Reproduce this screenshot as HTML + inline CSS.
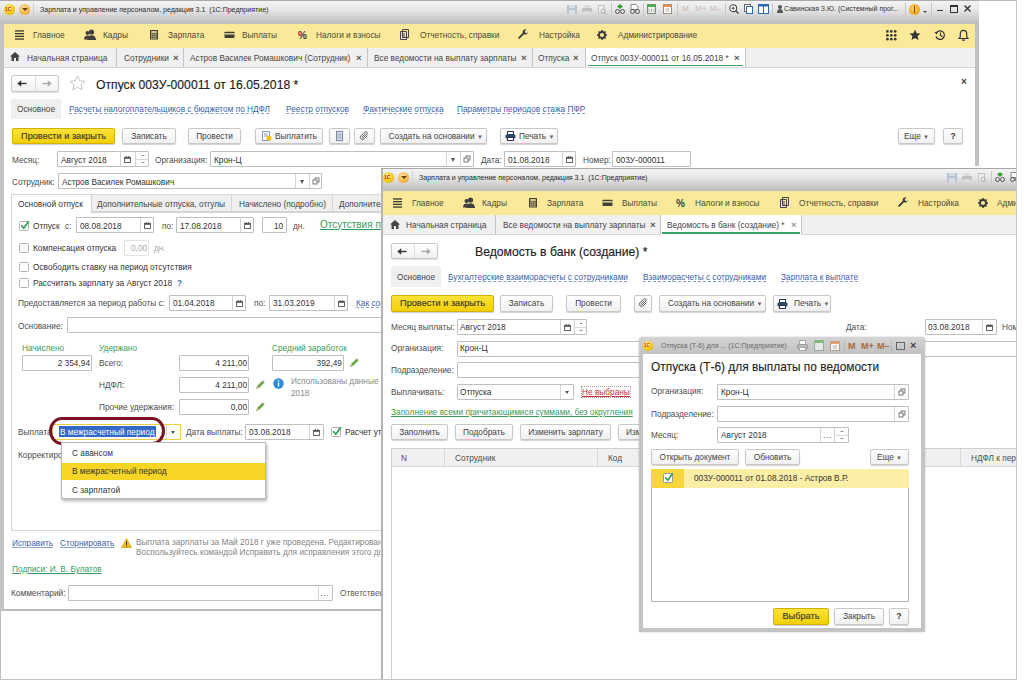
<!DOCTYPE html>
<html><head><meta charset="utf-8">
<style>
*{box-sizing:border-box;margin:0;padding:0}
html,body{width:1024px;height:687px;overflow:hidden;background:#fff}
body{position:relative;font-family:"Liberation Sans",sans-serif;font-size:8.3px;color:#4d4d4d;-webkit-font-smoothing:antialiased}
.a{position:absolute}
.t{position:absolute;white-space:nowrap;line-height:10px;height:10px}
.tb{position:absolute;background:linear-gradient(#f3f3f3,#e8e8e8 35%,#cdcdcd 75%,#bcbcbc)}
.menu{position:absolute;background:#fae998}
.tabs{position:absolute;background:#f0f0f0;border-bottom:1px solid #d6d6d6}
.sep{position:absolute;width:1px;background:#c4c4c4}
.fld{position:absolute;border:1px solid #bfbfbf;background:#fff;border-radius:1px;height:16px}
.fb{position:absolute;top:0;height:14px;border-left:1px solid #d4d4d4}
.btn{position:absolute;height:16px;border:1px solid #c8c8c8;border-radius:2px;background:linear-gradient(#ffffff,#f0f0f0);box-shadow:0 1px 1px rgba(0,0,0,.18);color:#444;text-align:center;line-height:14px;white-space:nowrap}
.ybtn{position:absolute;height:16px;border:1px solid #d2b200;border-radius:2px;background:linear-gradient(#fbe23a,#f3cf0a);box-shadow:0 1px 1px rgba(0,0,0,.2);color:#3a3a2a;font-size:9.2px;-webkit-text-stroke:0.15px #3a3a2a;text-align:center;line-height:14px;white-space:nowrap}
.lnk{color:#3d5fa6;text-decoration:underline;text-decoration-style:dashed;text-decoration-color:#8aa0c8}
.grn{color:#3b9b5c}
.dk{color:#333}
.cb{position:absolute;width:10px;height:10px;border:1px solid #b4b4b4;background:#fff;border-radius:1.5px}
.h{font-size:12.2px;color:#222;line-height:14px;height:14px;-webkit-text-stroke:0.15px #222}
</style></head><body>
<!-- outer frame -->
<div class="a" style="left:0;top:0;width:1017px;height:680px;border:1px solid #bdbdbd"></div>

<!-- ================= WINDOW 1 ================= -->
<div class="a" style="left:0;top:0;width:979px;height:611px;background:#fff;border-left:4px solid #c3c3c3;border-right:4px solid #c0c0c0;border-bottom:2px solid #b9b9b9"></div>
<div class="tb" style="left:0;top:1px;width:979px;height:22.5px"></div>
<div class="a" style="left:0;top:0;width:979px;height:1px;background:#aaa"></div>
<!-- title icons -->
<div class="a" style="left:4px;top:4px;width:11px;height:11px;border-radius:50%;background:radial-gradient(circle at 40% 35%,#fff7a0,#f2c400 60%,#e0a800)"></div>
<div class="t" style="left:5px;top:4px;font-size:5px;color:#d02000;font-weight:bold">1С</div>
<div class="a" style="left:19px;top:4px;width:11px;height:11px;border-radius:50%;background:radial-gradient(circle at 40% 35%,#ffe1a0,#f5b040 65%,#d99020)"></div>
<div class="a" style="left:22px;top:8px;width:0;height:0;border-left:3px solid transparent;border-right:3px solid transparent;border-top:3px solid #6a4000"></div>
<div class="sep" style="left:33px;top:3px;height:15px;background:#d0d0d0"></div>
<div class="t" style="left:40px;top:4.5px;font-size:7.05px;color:#2a2a2a">Зарплата и управление персоналом, редакция 3.1&nbsp; (1С:Предприятие)</div>

<!-- w1 title icons -->
<svg class="a" style="left:567px;top:5px" width="10" height="9" viewBox="0 0 10 9"><rect x="0" y="0" width="10" height="9" fill="#b9c4d0"/><rect x="2" y="0" width="6" height="3" fill="#d8dee6"/><rect x="2" y="5" width="6" height="4" fill="#d8dee6"/></svg><svg class="a" style="left:582px;top:5px" width="10" height="9" viewBox="0 0 10 9"><rect x="2" y="0" width="6" height="3" fill="#ddd"/><rect x="0" y="3" width="10" height="4" rx="1" fill="#c0c0c0"/><rect x="2" y="6" width="6" height="3" fill="#ddd"/></svg><svg class="a" style="left:598px;top:5px" width="9" height="10" viewBox="0 0 9 10"><rect x="0.5" y="0.5" width="6" height="8" fill="#eee" stroke="#c4c4c4"/><circle cx="5" cy="6" r="2" fill="none" stroke="#b0b0b0"/><path d="M6.5 7.5l2 2" stroke="#b0b0b0"/></svg><div class="sep" style="left:611px;top:3px;height:14px;background:#c8c8c8"></div><svg class="a" style="left:615px;top:4px" width="10" height="10" viewBox="0 0 10 10"><path d="M5 0l3 2.5-3 2.5-3-2.5z" fill="#3aa03a"/><circle cx="2.5" cy="7.5" r="2" fill="none" stroke="#555"/><circle cx="7.5" cy="7.5" r="2" fill="none" stroke="#555"/></svg><svg class="a" style="left:630px;top:4px" width="10" height="10" viewBox="0 0 10 10"><path d="M1 .5h5l2 2v3H1z" fill="#fff" stroke="#888"/><circle cx="2.5" cy="7.5" r="2" fill="none" stroke="#555"/><circle cx="7.5" cy="7.5" r="2" fill="none" stroke="#555"/></svg><div class="sep" style="left:643px;top:3px;height:14px;background:#c8c8c8"></div><svg class="a" style="left:647px;top:4px" width="9" height="10" viewBox="0 0 9 10"><rect x="0.5" y="0.5" width="8" height="9" fill="#eef2ee" stroke="#7a8a7a"/><rect x="0.5" y="0.5" width="8" height="2.5" fill="#4cae4c"/><path d="M2 5v3M4.5 5v3M7 5v3" stroke="#888" stroke-width=".6"/></svg><svg class="a" style="left:663px;top:4px" width="9" height="10" viewBox="0 0 9 10"><rect x="0.5" y="0.5" width="8" height="9" fill="#fff" stroke="#9a8a7a"/><rect x="0.5" y="0.5" width="8" height="2.5" fill="#e8904a"/><path d="M2.5 5h4M2.5 7h4" stroke="#888" stroke-width=".7"/></svg><div class="sep" style="left:677px;top:3px;height:14px;background:#c8c8c8"></div><div class="t" style="left:682px;top:4px;font-size:8px;color:#c8b8b0">M</div><div class="t" style="left:695px;top:4px;font-size:8px;color:#c8b8b0">M+</div><div class="t" style="left:710px;top:4px;font-size:8px;color:#c8b8b0">M–</div><div class="sep" style="left:725px;top:3px;height:14px;background:#c8c8c8"></div><svg class="a" style="left:729px;top:4px" width="10" height="10" viewBox="0 0 10 10"><circle cx="4.2" cy="4.2" r="3.4" fill="#fff" stroke="#444" stroke-width="1.1"/><path d="M2.5 4.2h3.4M4.2 2.5v3.4" stroke="#444" stroke-width=".9"/><path d="M6.7 6.7l2.8 2.8" stroke="#444" stroke-width="1.4"/></svg><svg class="a" style="left:744px;top:4px" width="9" height="10" viewBox="0 0 9 10"><rect x="0.5" y="0.5" width="6" height="7" fill="#fff" stroke="#666"/><rect x="2.5" y="2.5" width="6" height="7" fill="#fff" stroke="#2d6ab0"/></svg><svg class="a" style="left:758px;top:4px" width="11" height="10" viewBox="0 0 11 10"><rect x="0.5" y="0.5" width="10" height="9" fill="#fff" stroke="#2d6ab0"/><rect x="0.5" y="0.5" width="10" height="2" fill="#2d6ab0"/><path d="M5.5 2v8" stroke="#2d6ab0"/></svg><div class="sep" style="left:772px;top:3px;height:14px;background:#c8c8c8"></div><svg class="a" style="left:777px;top:5px" width="6" height="8" viewBox="0 0 6 8"><circle cx="3" cy="2" r="2" fill="#555"/><path d="M0 8c0-3 1.3-4 3-4s3 1 3 4z" fill="#555"/></svg><div class="t" style="left:784px;top:4px;font-size:7px;color:#333">Савинская З.Ю. (Системный прог...</div><div class="sep" style="left:905px;top:3px;height:14px;background:#c8c8c8"></div><div class="a" style="left:909px;top:4px;width:11px;height:11px;border-radius:50%;background:radial-gradient(circle at 45% 40%,#ffd060,#f0a820 70%,#d08a10)"></div><div class="a" style="left:914px;top:6px;width:1px;height:7px;background:#7a5000"></div><div class="a" style="left:923px;top:11px;width:0;height:0;border-left:2.5px solid transparent;border-right:2.5px solid transparent;border-top:2.5px solid #444"></div><div class="sep" style="left:931px;top:3px;height:14px;background:#c8c8c8"></div><div class="a" style="left:937px;top:10px;width:6px;height:1.2px;background:#333"></div><div class="a" style="left:950px;top:5px;width:8px;height:8px;border:1px solid #333;border-top-width:2px"></div><svg class="a" style="left:964px;top:5px" width="7" height="7" viewBox="0 0 7 7"><path d="M.5 .5l6 6M6.5 .5l-6 6" stroke="#333" stroke-width="1.4"/></svg>
<div class="menu" style="left:4px;top:23.5px;width:971px;height:24px"></div>
<div class="tabs" style="left:4px;top:47.5px;width:971px;height:20.5px"></div>

<!-- menu items w1 -->
<svg class="a" style="left:15px;top:30px" width="9" height="10" viewBox="0 0 9 10"><g fill="#3a3a30"><rect y="0.3" width="9" height="1.3"/><rect y="3" width="9" height="1.3"/><rect y="5.7" width="9" height="1.3"/><rect y="8.4" width="9" height="1.3"/></g></svg>
<div class="t" style="left:33px;top:30px;color:#4a4a3a">Главное</div>
<svg class="a" style="left:84px;top:29px" width="12" height="11" viewBox="0 0 12 11"><g fill="#3f3f3f"><circle cx="7.5" cy="3" r="2.6"/><path d="M3 11c0-3 2-4.8 4.5-4.8S12 8 12 11z"/><circle cx="3.5" cy="4" r="2"/><path d="M0 10.5c0-2.5 1.5-4 3.5-4 .8 0 1.5.2 2 .6C4.3 8 3.6 9 3.5 10.5z"/></g></svg>
<div class="t" style="left:103px;top:30px;color:#4a4a3a">Кадры</div>
<svg class="a" style="left:150px;top:29px" width="8" height="11" viewBox="0 0 8 11"><rect x="0" y="1" width="8" height="9.5" rx=".6" fill="#3f3f38"/><rect x="1.2" y="2.2" width="5.6" height="1.6" fill="#fae998"/><g fill="#fae998"><rect x="1.20" y="4.60" width="1.3" height="1.2"/><rect x="3.25" y="4.60" width="1.3" height="1.2"/><rect x="5.30" y="4.60" width="1.3" height="1.2"/><rect x="1.20" y="6.55" width="1.3" height="1.2"/><rect x="3.25" y="6.55" width="1.3" height="1.2"/><rect x="5.30" y="6.55" width="1.3" height="1.2"/><rect x="1.20" y="8.50" width="1.3" height="1.2"/><rect x="3.25" y="8.50" width="1.3" height="1.2"/><rect x="5.30" y="8.50" width="1.3" height="1.2"/></g></svg>
<div class="t" style="left:168px;top:30px;color:#4a4a3a">Зарплата</div>
<svg class="a" style="left:224px;top:31px" width="12" height="8" viewBox="0 0 12 8"><rect x="0.5" y="0.8" width="10" height="6.2" rx=".8" fill="#3f3f38"/><rect x="0.5" y="2.2" width="10" height="1.3" fill="#fae998"/></svg>
<div class="t" style="left:242px;top:30px;color:#4a4a3a">Выплаты</div>
<div class="t" style="left:298px;top:31px;color:#3a3a3a;font-size:10px;font-weight:bold">%</div>
<div class="t" style="left:316px;top:30px;color:#4a4a3a">Налоги и взносы</div>
<svg class="a" style="left:400px;top:29px" width="9" height="11" viewBox="0 0 9 11"><path d="M2.5 .5h6v8h-6z M.5 2.5h6v8h-6z" fill="none" stroke="#444" stroke-width="1"/><path d="M2 5h3M2 7h3" stroke="#444"/></svg>
<div class="t" style="left:420px;top:30px;color:#4a4a3a">Отчетность, справки</div>
<svg class="a" style="left:518px;top:29px" width="11" height="11" viewBox="0 0 11 11"><path d="M10 2.5a3 3 0 0 1-4 2.8L1.8 9.6a1 1 0 0 1-1.4-1.4L4.7 4A3 3 0 0 1 8.5.4L6.8 2.1l.4 1.7 1.7.4z" fill="#3a3a3a"/></svg>
<div class="t" style="left:539px;top:30px;color:#4a4a3a">Настройка</div>
<svg class="a" style="left:597px;top:30px" width="10" height="10" viewBox="0 0 10 10"><circle cx="5" cy="5" r="3" fill="none" stroke="#3a3a3a" stroke-width="1.8"/><g stroke="#3a3a3a" stroke-width="1.5"><path d="M5 0v2M5 8v2M0 5h2M8 5h2M1.5 1.5l1.4 1.4M7.1 7.1l1.4 1.4M1.5 8.5l1.4-1.4M7.1 2.9l1.4-1.4"/></g></svg>
<div class="t" style="left:618px;top:30px;color:#4a4a3a">Администрирование</div>
<svg class="a" style="left:886px;top:29.5px" width="11" height="11" viewBox="0 0 11 11"><g fill="#3a3a3a"><circle cx="1.40" cy="1.40" r="1.35"/><circle cx="5.30" cy="1.40" r="1.35"/><circle cx="9.20" cy="1.40" r="1.35"/><circle cx="1.40" cy="5.30" r="1.35"/><circle cx="5.30" cy="5.30" r="1.35"/><circle cx="9.20" cy="5.30" r="1.35"/><circle cx="1.40" cy="9.20" r="1.35"/><circle cx="5.30" cy="9.20" r="1.35"/><circle cx="9.20" cy="9.20" r="1.35"/></g></svg>
<svg class="a" style="left:909px;top:29px" width="12" height="12" viewBox="0 0 12 12"><path d="M6 0.5l1.6 3.7 4 .3-3 2.6.9 3.9L6 8.9 2.5 11l.9-3.9-3-2.6 4-.3z" fill="#333"/></svg>
<svg class="a" style="left:934px;top:29px" width="12" height="12" viewBox="0 0 12 12"><path d="M2.2 4.2A4.3 4.3 0 1 1 2 7.5" fill="none" stroke="#333" stroke-width="1.2"/><path d="M0.5 3.2l2.2 2.2 1.2-2.8z" fill="#333"/><path d="M6.5 3.5v3l2 1.2" fill="none" stroke="#333" stroke-width="1.1"/></svg>
<svg class="a" style="left:958px;top:29px" width="11" height="12" viewBox="0 0 11 12"><path d="M5.5 1.3c-2 0-3.2 1.5-3.2 3.5v3L1 9.5h9L8.7 7.8v-3c0-2-1.2-3.5-3.2-3.5z" fill="none" stroke="#333" stroke-width="1.2"/><path d="M4 10.5a1.5 1.5 0 0 0 3 0" fill="#333"/></svg>

<!-- tabs w1 -->
<svg class="a" style="left:10px;top:52px" width="10" height="9" viewBox="0 0 10 9"><path d="M5 0L0 4.5h1.5V9h2.5V6h2v3h2.5V4.5H10z" fill="#444"/></svg>
<div class="t" style="left:27px;top:52.5px;color:#444">Начальная страница</div>
<div class="sep" style="left:116px;top:48px;height:19px"></div>
<div class="t" style="left:124px;top:52.5px;color:#444">Сотрудники</div>
<div class="t" style="left:173px;top:52.5px;color:#555;font-size:9.5px;font-weight:bold">×</div>
<div class="sep" style="left:183px;top:48px;height:19px"></div>
<div class="t" style="left:190px;top:52.5px;color:#444">Астров Василек Ромашкович (Сотрудник)</div>
<div class="t" style="left:356px;top:52.5px;color:#555;font-size:9.5px;font-weight:bold">×</div>
<div class="sep" style="left:367px;top:48px;height:19px"></div>
<div class="t" style="left:374px;top:52.5px;color:#444">Все ведомости на выплату зарплаты</div>
<div class="t" style="left:521px;top:52.5px;color:#555;font-size:9.5px;font-weight:bold">×</div>
<div class="sep" style="left:532px;top:48px;height:19px"></div>
<div class="t" style="left:538px;top:52.5px;color:#444">Отпуска</div>
<div class="t" style="left:573px;top:52.5px;color:#555;font-size:9.5px;font-weight:bold">×</div>
<div class="sep" style="left:585px;top:48px;height:19px"></div>
<div class="a" style="left:586px;top:48px;width:159px;height:19px;background:#fff"></div>
<div class="t" style="left:591px;top:52.5px;color:#444">Отпуск 003У-000011 от 16.05.2018 *</div>
<div class="t" style="left:734px;top:52.5px;color:#555;font-size:9.5px;font-weight:bold">×</div>
<div class="sep" style="left:745px;top:48px;height:19px"></div>
<div class="a" style="left:588px;top:64.5px;width:155px;height:1.6px;background:#3aa36a"></div>

<!-- w1 content header -->
<div class="btn" style="left:11px;top:75px;width:48px;height:17px;box-shadow:0 1px 1px rgba(0,0,0,.12)"></div>
<div class="sep" style="left:35px;top:76px;height:15px;background:#dcdcdc"></div>
<svg class="a" style="left:17px;top:80px" width="10" height="7" viewBox="0 0 10 7"><path d="M0.3 3.5L4.2 0.3v6.4z" fill="#333"/><rect x="3.5" y="2.8" width="6" height="1.4" fill="#333"/></svg>
<svg class="a" style="left:42px;top:80px" width="10" height="7" viewBox="0 0 10 7"><path d="M9.7 3.5L5.8 0.3v6.4z" fill="#aaa"/><rect x="0.5" y="2.8" width="6" height="1.4" fill="#aaa"/></svg>
<svg class="a" style="left:69px;top:75px" width="17" height="16" viewBox="0 0 17 16"><path d="M8.5 1l2.2 4.8 5.2.5-3.9 3.5 1.1 5.1-4.6-2.7-4.6 2.7 1.1-5.1L1.1 6.3l5.2-.5z" fill="none" stroke="#c4c4c4" stroke-width="1"/></svg>
<div class="t h" style="left:96px;top:77.7px">Отпуск 003У-000011 от 16.05.2018 *</div>
<div class="t" style="left:961px;top:77px;color:#444;font-size:10px;font-weight:bold">×</div>

<div class="a" style="left:11px;top:99px;width:50px;height:20px;background:#efefef;border-radius:2px"></div>
<div class="t" style="left:17px;top:104px;color:#444">Основное</div>
<div class="t lnk" style="left:69px;top:104px">Расчеты налогоплательщиков с бюджетом по НДФЛ</div>
<div class="t lnk" style="left:286px;top:104px">Реестр отпусков</div>
<div class="t lnk" style="left:363px;top:104px">Фактические отпуска</div>
<div class="t lnk" style="left:457px;top:104px">Параметры периодов стажа ПФР</div>

<!-- command bar -->
<div class="ybtn" style="left:12px;top:128px;width:103px">Провести и закрыть</div>
<div class="btn" style="left:122px;top:128px;width:54px">Записать</div>
<div class="btn" style="left:188px;top:128px;width:53px">Провести</div>
<div class="btn" style="left:255px;top:128px;width:68px;padding-left:14px">Выплатить</div>
<svg class="a" style="left:262px;top:131px" width="10" height="10" viewBox="0 0 10 10"><rect x="0.5" y="0.5" width="7" height="9" fill="#fff" stroke="#8a9ab0"/><path d="M2 3h4M2 5h4" stroke="#8a9ab0"/><circle cx="7" cy="7" r="2.5" fill="#f3c200"/></svg>
<div class="btn" style="left:329px;top:128px;width:21px"></div>
<svg class="a" style="left:336px;top:131px" width="7" height="10" viewBox="0 0 7 10"><rect x="0.5" y="0.5" width="6" height="9" fill="#dfe6f0" stroke="#7a8aa0"/><path d="M1.5 3h4M1.5 5h4M1.5 7h4" stroke="#7a8aa0" stroke-width=".8"/></svg>
<div class="btn" style="left:354px;top:128px;width:21px"></div>
<svg class="a" style="left:359px;top:131px" width="11" height="10" viewBox="0 0 11 10"><path d="M8.5 4.5L5 8a2.2 2.2 0 0 1-3.1-3.1l4-4a1.5 1.5 0 0 1 2.1 2.1L4.3 6.6a.7.7 0 0 1-1-1L6.5 2.5" fill="none" stroke="#666" stroke-width="1"/></svg>
<div class="btn" style="left:380px;top:128px;width:107px;text-align:left;padding-left:7.5px">Создать на основании <span style="font-size:6px;color:#666">&#9660;</span></div>
<div class="btn" style="left:500px;top:128px;width:58px;text-align:left;padding-left:18px">Печать <span style="font-size:6px;color:#666">&#9660;</span></div>
<svg class="a" style="left:505px;top:131px" width="11" height="10" viewBox="0 0 11 10"><rect x="2.5" y="0.5" width="6" height="3" fill="#fff" stroke="#335"/><rect x="0.5" y="3.5" width="10" height="4" rx="1" fill="#2c4c6e"/><rect x="2.5" y="6.5" width="6" height="3" fill="#fff" stroke="#335"/></svg>
<div class="btn" style="left:898px;top:128px;width:37px">Еще <span style="font-size:6px;color:#666">&#9660;</span></div>
<div class="btn dk" style="left:943px;top:128px;width:20px;font-weight:bold">?</div>

<!-- Месяц row -->
<div class="t" style="left:12px;top:155px">Месяц:</div>
<div class="fld" style="left:57px;top:151px;width:92px"></div>
<div class="t dk" style="left:61px;top:155px">Август 2018</div>
<div class="fb" style="left:120px;top:152px;width:15px"></div>
<svg class="a" style="left:124px;top:156px" width="7" height="7" viewBox="0 0 7 7"><rect x="0.5" y="1.5" width="6" height="5" fill="none" stroke="#555" stroke-width=".9"/><rect x="0.5" y="1" width="6" height="1.8" fill="#555"/><rect x="1.8" y="0" width="1" height="1.5" fill="#555"/><rect x="4.2" y="0" width="1" height="1.5" fill="#555"/></svg>
<div class="a" style="left:135px;top:152px;width:14px;height:14px;border-left:1px solid #d0d0d0"></div><div class="a" style="left:135px;top:159px;width:14px;height:1px;background:#d8d8d8"></div><div class="a" style="left:140.5px;top:155px;width:0;height:0;border-left:2px solid transparent;border-right:2px solid transparent;border-bottom:1.6px solid #666"></div><div class="a" style="left:140.5px;top:162px;width:0;height:0;border-left:2px solid transparent;border-right:2px solid transparent;border-top:1.6px solid #666"></div>
<div class="t" style="left:155px;top:155px">Организация:</div>
<div class="fld" style="left:210px;top:151px;width:264px"></div>
<div class="t dk" style="left:214px;top:155px">Крон-Ц</div>
<div class="fb" style="left:446px;top:152px;width:14px"></div>
<div class="a" style="left:451px;top:158px;width:0;height:0;border-left:2.5px solid transparent;border-right:2.5px solid transparent;border-top:4px solid #555"></div>
<div class="fb" style="left:460px;top:152px;width:14px"></div>
<svg class="a" style="left:463px;top:155px" width="8" height="8" viewBox="0 0 8 8"><rect x="3" y="1" width="4" height="4" fill="none" stroke="#6a6a6a" stroke-width=".9"/><rect x="1" y="3" width="4" height="4" fill="#fff" stroke="#6a6a6a" stroke-width=".9"/></svg>
<div class="t" style="left:481px;top:155px">Дата:</div>
<div class="fld" style="left:504px;top:151px;width:72px"></div>
<div class="t dk" style="left:508px;top:155px">01.08.2018</div>
<div class="fb" style="left:562px;top:152px;width:14px"></div>
<svg class="a" style="left:566px;top:156px" width="7" height="7" viewBox="0 0 7 7"><rect x="0.5" y="1.5" width="6" height="5" fill="none" stroke="#555" stroke-width=".9"/><rect x="0.5" y="1" width="6" height="1.8" fill="#555"/><rect x="1.8" y="0" width="1" height="1.5" fill="#555"/><rect x="4.2" y="0" width="1" height="1.5" fill="#555"/></svg>
<div class="t" style="left:583px;top:155px">Номер:</div>
<div class="fld" style="left:612px;top:151px;width:79px"></div>
<div class="t dk" style="left:616px;top:155px">003У-000011</div>

<!-- Сотрудник row -->
<div class="t" style="left:12px;top:177px">Сотрудник:</div>
<div class="fld" style="left:58px;top:173px;width:264px"></div>
<div class="t dk" style="left:62px;top:177px">Астров Василек Ромашкович</div>
<div class="fb" style="left:295px;top:174px;width:14px"></div>
<div class="a" style="left:300px;top:180px;width:0;height:0;border-left:2.5px solid transparent;border-right:2.5px solid transparent;border-top:4px solid #555"></div>
<div class="fb" style="left:309px;top:174px;width:13px"></div>
<svg class="a" style="left:312px;top:177px" width="8" height="8" viewBox="0 0 8 8"><rect x="3" y="1" width="4" height="4" fill="none" stroke="#6a6a6a" stroke-width=".9"/><rect x="1" y="3" width="4" height="4" fill="#fff" stroke="#6a6a6a" stroke-width=".9"/></svg>

<!-- tabs panel -->
<div class="a" style="left:11px;top:212px;width:380px;height:319px;border:1px solid #d4d4d4;border-right:none"></div>
<div class="a" style="left:91px;top:194px;width:300px;height:18px;background:#efefef;border-top:1px solid #dcdcdc;border-bottom:1px solid #d4d4d4"></div>
<div class="a" style="left:11px;top:194px;width:81px;height:19px;background:#fff;border:1px solid #d4d4d4;border-bottom:none"></div>
<div class="sep" style="left:231px;top:195px;height:17px;background:#d4d4d4"></div>
<div class="sep" style="left:332px;top:195px;height:17px;background:#d4d4d4"></div>
<div class="t dk" style="left:18px;top:199px">Основной отпуск</div>
<div class="t" style="left:97px;top:199px;color:#444">Дополнительные отпуска, отгулы</div>
<div class="t" style="left:239px;top:199px;color:#444">Начислено (подробно)</div>
<div class="t" style="left:339px;top:199px;color:#444">Дополнительно</div>

<!-- Отпуск row -->
<div class="cb" style="left:19px;top:221px"></div>
<svg class="a" style="left:19px;top:220px" width="11" height="11" viewBox="0 0 11 11"><path d="M2.2 5.2l2.6 3L9.8 1.3" fill="none" stroke="#2f9a55" stroke-width="1.7"/></svg>
<div class="t dk" style="left:33px;top:221px">Отпуск</div>
<div class="t" style="left:65px;top:221px">с:</div>
<div class="fld" style="left:76px;top:217px;width:78px"></div>
<div class="t dk" style="left:80px;top:221px">08.08.2018</div>
<div class="fb" style="left:140px;top:218px;width:14px"></div>
<svg class="a" style="left:144px;top:222px" width="7" height="7" viewBox="0 0 7 7"><rect x="0.5" y="1.5" width="6" height="5" fill="none" stroke="#555" stroke-width=".9"/><rect x="0.5" y="1" width="6" height="1.8" fill="#555"/><rect x="1.8" y="0" width="1" height="1.5" fill="#555"/><rect x="4.2" y="0" width="1" height="1.5" fill="#555"/></svg>
<div class="t" style="left:162px;top:221px">по:</div>
<div class="fld" style="left:176px;top:217px;width:78px"></div>
<div class="t dk" style="left:180px;top:221px">17.08.2018</div>
<div class="fb" style="left:240px;top:218px;width:14px"></div>
<svg class="a" style="left:244px;top:222px" width="7" height="7" viewBox="0 0 7 7"><rect x="0.5" y="1.5" width="6" height="5" fill="none" stroke="#555" stroke-width=".9"/><rect x="0.5" y="1" width="6" height="1.8" fill="#555"/><rect x="1.8" y="0" width="1" height="1.5" fill="#555"/><rect x="4.2" y="0" width="1" height="1.5" fill="#555"/></svg>
<div class="fld" style="left:262px;top:217px;width:25px"></div>
<div class="t dk" style="left:274px;top:221px">10</div>
<div class="t" style="left:293px;top:221px">дн.</div>
<div class="t grn" style="left:320px;top:219.5px;font-size:10px;text-decoration:underline">Отсутствия периода</div>

<div class="cb" style="left:19px;top:243px"></div>
<div class="t dk" style="left:33px;top:243px">Компенсация отпуска</div>
<div class="fld" style="left:124px;top:240px;width:25px;border-color:#e4e4e4"></div>
<div class="t" style="left:131px;top:243px;color:#aaa">0,00</div>
<div class="t" style="left:154px;top:243px;color:#aaa">дн.</div>

<div class="cb" style="left:19px;top:262px"></div>
<div class="t dk" style="left:33px;top:262px">Освободить ставку на период отсутствия</div>
<div class="cb" style="left:19px;top:278px"></div>
<div class="t dk" style="left:33px;top:278px">Рассчитать зарплату за Август 2018</div>
<div class="t" style="left:177px;top:278px;color:#3d6fb0;font-weight:bold">?</div>

<div class="t" style="left:18px;top:298px">Предоставляется за период работы с:</div>
<div class="fld" style="left:169px;top:295px;width:77px"></div>
<div class="t dk" style="left:173px;top:298px">01.04.2018</div>
<div class="fb" style="left:232px;top:296px;width:14px"></div>
<svg class="a" style="left:236px;top:300px" width="7" height="7" viewBox="0 0 7 7"><rect x="0.5" y="1.5" width="6" height="5" fill="none" stroke="#555" stroke-width=".9"/><rect x="0.5" y="1" width="6" height="1.8" fill="#555"/><rect x="1.8" y="0" width="1" height="1.5" fill="#555"/><rect x="4.2" y="0" width="1" height="1.5" fill="#555"/></svg>
<div class="t" style="left:254px;top:298px">по:</div>
<div class="fld" style="left:269px;top:295px;width:79px"></div>
<div class="t dk" style="left:273px;top:298px">31.03.2019</div>
<div class="fb" style="left:334px;top:296px;width:14px"></div>
<svg class="a" style="left:338px;top:300px" width="7" height="7" viewBox="0 0 7 7"><rect x="0.5" y="1.5" width="6" height="5" fill="none" stroke="#555" stroke-width=".9"/><rect x="0.5" y="1" width="6" height="1.8" fill="#555"/><rect x="1.8" y="0" width="1" height="1.5" fill="#555"/><rect x="4.2" y="0" width="1" height="1.5" fill="#555"/></svg>
<div class="t lnk" style="left:356px;top:298px">Как согласовать</div>

<div class="t" style="left:18px;top:321px">Основание:</div>
<div class="fld" style="left:67px;top:317px;width:330px"></div>

<!-- amounts -->
<div class="t grn" style="left:22px;top:343px">Начислено</div>
<div class="t grn" style="left:99px;top:343px">Удержано</div>
<div class="t grn" style="left:272px;top:343px">Средний заработок</div>
<div class="fld" style="left:22px;top:355px;width:70px"></div>
<div class="t dk" style="left:22px;top:358px;width:68px;text-align:right">2 354,94</div>
<div class="t" style="left:99px;top:358px">Всего:</div>
<div class="fld" style="left:179px;top:355px;width:70px"></div>
<div class="t dk" style="left:179px;top:358px;width:68px;text-align:right">4 211,00</div>
<div class="fld" style="left:272px;top:355px;width:72px"></div>
<div class="t dk" style="left:272px;top:358px;width:70px;text-align:right">392,49</div>
<svg class="a pen" style="left:350px;top:358px" width="9" height="9" viewBox="0 0 9 9"><path d="M0.5 8.5l.6-2.6L6.3.7l2 2-5.2 5.2z" fill="#6aa84a"/><path d="M6.3.7l2 2 .5-.5-2-2z" fill="#d88"/><path d="M0.5 8.5l.6-2.6 2 2z" fill="#e8d0a0"/><path d="M0.5 8.5l.3-1.2.9.9z" fill="#333"/></svg>
<div class="t" style="left:99px;top:380px">НДФЛ:</div>
<div class="fld" style="left:179px;top:377px;width:70px"></div>
<div class="t dk" style="left:179px;top:380px;width:68px;text-align:right">4 211,00</div>
<svg class="a" style="left:256px;top:380px" width="9" height="9" viewBox="0 0 9 9"><path d="M0.5 8.5l.6-2.6L6.3.7l2 2-5.2 5.2z" fill="#6aa84a"/><path d="M6.3.7l2 2 .5-.5-2-2z" fill="#d88"/><path d="M0.5 8.5l.6-2.6 2 2z" fill="#e8d0a0"/><path d="M0.5 8.5l.3-1.2.9.9z" fill="#333"/></svg>
<svg class="a" style="left:273px;top:378px" width="11" height="11" viewBox="0 0 11 11"><circle cx="5.5" cy="5.5" r="5.2" fill="#2f8ad8"/><rect x="4.8" y="4.5" width="1.4" height="4" fill="#fff"/><rect x="4.8" y="2.2" width="1.4" height="1.4" fill="#fff"/></svg>
<div class="t" style="left:291px;top:376px;color:#8a8a8a">Использованы данные</div>
<div class="t" style="left:291px;top:388px;color:#8a8a8a">2018</div>
<div class="t" style="left:99px;top:402px">Прочие удержания:</div>
<div class="fld" style="left:179px;top:399px;width:70px"></div>
<div class="t dk" style="left:179px;top:402px;width:68px;text-align:right">0,00</div>
<svg class="a" style="left:256px;top:402px" width="9" height="9" viewBox="0 0 9 9"><path d="M0.5 8.5l.6-2.6L6.3.7l2 2-5.2 5.2z" fill="#6aa84a"/><path d="M6.3.7l2 2 .5-.5-2-2z" fill="#d88"/><path d="M0.5 8.5l.6-2.6 2 2z" fill="#e8d0a0"/><path d="M0.5 8.5l.3-1.2.9.9z" fill="#333"/></svg>

<!-- Выплата row -->
<div class="t" style="left:18px;top:427px">Выплата:</div>
<div class="fld" style="left:52px;top:424px;width:129px;border-color:#e8cf4a"></div>
<div class="fb" style="left:166px;top:425px;width:15px"></div>
<div class="a" style="left:171px;top:431px;width:0;height:0;border-left:2.5px solid transparent;border-right:2.5px solid transparent;border-top:3px solid #555"></div>
<div class="a" style="left:59px;top:426px;width:97px;height:11px;background:#3367c8"></div>
<div class="t" style="left:60px;top:427px;color:#fff">В межрасчетный период</div>
<div class="a" style="left:49px;top:417px;width:116px;height:28px;border:3.2px solid #7a1424;border-radius:13px/14px;"></div>
<div class="t" style="left:186px;top:427px">Дата выплаты:</div>
<div class="fld" style="left:245px;top:424px;width:79px"></div>
<div class="t dk" style="left:249px;top:427px">03.08.2018</div>
<div class="fb" style="left:309px;top:425px;width:15px"></div>
<svg class="a" style="left:313px;top:429px" width="7" height="7" viewBox="0 0 7 7"><rect x="0.5" y="1.5" width="6" height="5" fill="none" stroke="#555" stroke-width=".9"/><rect x="0.5" y="1" width="6" height="1.8" fill="#555"/><rect x="1.8" y="0" width="1" height="1.5" fill="#555"/><rect x="4.2" y="0" width="1" height="1.5" fill="#555"/></svg>
<div class="cb" style="left:331px;top:427px"></div>
<svg class="a" style="left:331px;top:426px" width="11" height="11" viewBox="0 0 11 11"><path d="M2.2 5.2l2.6 3L9.8 1.3" fill="none" stroke="#2f9a55" stroke-width="1.7"/></svg>
<div class="t dk" style="left:345px;top:427px">Расчет утвержден</div>
<div class="t" style="left:18px;top:450px">Корректировка</div>

<!-- dropdown list -->
<div class="a" style="left:61px;top:442px;width:205px;height:57px;background:#fff;border:1px solid #b8b8b8;box-shadow:1px 2px 3px rgba(0,0,0,.3)"></div>
<div class="t dk" style="left:72px;top:448px">С авансом</div>
<div class="a" style="left:62px;top:462.5px;width:203px;height:17px;background:#f7d524"></div>
<div class="t dk" style="left:72px;top:466px">В межрасчетный период</div>
<div class="t dk" style="left:72px;top:485px">С зарплатой</div>

<!-- bottom -->
<div class="t lnk" style="left:12px;top:538px;text-decoration-style:solid">Исправить</div>
<div class="t lnk" style="left:60px;top:538px;text-decoration-style:solid">Сторнировать</div>
<svg class="a" style="left:121px;top:538px" width="11" height="10" viewBox="0 0 11 10"><path d="M5.5 0.5L10.5 9.5h-10z" fill="#f0c020" stroke="#c09000" stroke-width=".6"/><rect x="5" y="3.5" width="1" height="3.5" fill="#333"/><rect x="5" y="7.7" width="1" height="1" fill="#333"/></svg>
<div class="t" style="left:136px;top:537px;color:#858585">Выплата зарплаты за Май 2018 г уже проведена. Редактирование</div>
<div class="t" style="left:136px;top:546.5px;color:#858585">Воспользуйтесь командой Исправить для исправления этого документа</div>
<div class="t grn" style="left:12px;top:564px;text-decoration:underline">Подписи: И. В. Булатов</div>
<div class="t" style="left:11px;top:588px">Комментарий:</div>
<div class="fld" style="left:68px;top:585px;width:265px"></div>
<div class="fb" style="left:318px;top:586px;width:15px"></div>
<div class="t" style="left:320.5px;top:588px;color:#555;letter-spacing:0.6px">...</div>
<div class="t" style="left:340px;top:588px;color:#5a5a5a">Ответственный</div>

<div class="a" style="left:974px;top:166px;width:7px;height:2px;background:#fff"></div>
<!-- ================= WINDOW 2 ================= -->
<div class="a" style="left:381px;top:168px;width:636px;height:512px;background:#fff;border-left:2px solid #b4b4b4;border-top:1px solid #a8a8a8;border-bottom:1px solid #bdbdbd"></div>
<div class="tb" style="left:383px;top:169px;width:633px;height:22px"></div>
<div class="a" style="left:383px;top:172px;width:11px;height:11px;border-radius:50%;background:radial-gradient(circle at 40% 35%,#fff7a0,#f2c400 60%,#e0a800)"></div>
<div class="t" style="left:384px;top:172px;font-size:5px;color:#d02000;font-weight:bold">1С</div>
<div class="a" style="left:398px;top:172px;width:11px;height:11px;border-radius:50%;background:radial-gradient(circle at 40% 35%,#ffe1a0,#f5b040 65%,#d99020)"></div>
<div class="a" style="left:401px;top:176px;width:0;height:0;border-left:3px solid transparent;border-right:3px solid transparent;border-top:3px solid #6a4000"></div>
<div class="sep" style="left:412px;top:171px;height:15px;background:#d0d0d0"></div>
<div class="t" style="left:419px;top:173px;font-size:7.05px;color:#2a2a2a">Зарплата и управление персоналом, редакция 3.1&nbsp; (1С:Предприятие)</div>
<!-- w2 title icons right -->
<!-- w2 title icons -->
<svg class="a" style="left:947px;top:173px" width="10" height="9" viewBox="0 0 10 9"><rect x="0" y="0" width="10" height="9" fill="#b9c4d0"/><rect x="2" y="0" width="6" height="3" fill="#d8dee6"/><rect x="2" y="5" width="6" height="4" fill="#d8dee6"/></svg><svg class="a" style="left:962px;top:173px" width="10" height="9" viewBox="0 0 10 9"><rect x="2" y="0" width="6" height="3" fill="#ddd"/><rect x="0" y="3" width="10" height="4" rx="1" fill="#c0c0c0"/><rect x="2" y="6" width="6" height="3" fill="#ddd"/></svg><svg class="a" style="left:978px;top:173px" width="9" height="10" viewBox="0 0 9 10"><rect x="0.5" y="0.5" width="6" height="8" fill="#eee" stroke="#c4c4c4"/><circle cx="5" cy="6" r="2" fill="none" stroke="#b0b0b0"/><path d="M6.5 7.5l2 2" stroke="#b0b0b0"/></svg><div class="sep" style="left:991px;top:171px;height:14px;background:#c8c8c8"></div><svg class="a" style="left:995px;top:172px" width="10" height="10" viewBox="0 0 10 10"><path d="M5 0l3 2.5-3 2.5-3-2.5z" fill="#3aa03a"/><circle cx="2.5" cy="7.5" r="2" fill="none" stroke="#555"/><circle cx="7.5" cy="7.5" r="2" fill="none" stroke="#555"/></svg><svg class="a" style="left:1010px;top:172px" width="10" height="10" viewBox="0 0 10 10"><path d="M1 .5h5l2 2v3H1z" fill="#fff" stroke="#888"/><circle cx="2.5" cy="7.5" r="2" fill="none" stroke="#555"/><circle cx="7.5" cy="7.5" r="2" fill="none" stroke="#555"/></svg>
<div class="menu" style="left:383px;top:191px;width:633px;height:24px"></div>
<div class="tabs" style="left:383px;top:215px;width:633px;height:20px"></div>

<svg class="a" style="left:393px;top:198px" width="9" height="10" viewBox="0 0 9 10"><g fill="#3a3a30"><rect y="0.3" width="9" height="1.3"/><rect y="3" width="9" height="1.3"/><rect y="5.7" width="9" height="1.3"/><rect y="8.4" width="9" height="1.3"/></g></svg>
<div class="t" style="left:412px;top:198px;color:#4a4a3a">Главное</div>
<svg class="a" style="left:463px;top:197px" width="12" height="11" viewBox="0 0 12 11"><g fill="#3f3f3f"><circle cx="7.5" cy="3" r="2.6"/><path d="M3 11c0-3 2-4.8 4.5-4.8S12 8 12 11z"/><circle cx="3.5" cy="4" r="2"/><path d="M0 10.5c0-2.5 1.5-4 3.5-4 .8 0 1.5.2 2 .6C4.3 8 3.6 9 3.5 10.5z"/></g></svg>
<div class="t" style="left:482px;top:198px;color:#4a4a3a">Кадры</div>
<svg class="a" style="left:529px;top:197px" width="8" height="11" viewBox="0 0 8 11"><rect x="0" y="1" width="8" height="9.5" rx=".6" fill="#3f3f38"/><rect x="1.2" y="2.2" width="5.6" height="1.6" fill="#fae998"/><g fill="#fae998"><rect x="1.20" y="4.60" width="1.3" height="1.2"/><rect x="3.25" y="4.60" width="1.3" height="1.2"/><rect x="5.30" y="4.60" width="1.3" height="1.2"/><rect x="1.20" y="6.55" width="1.3" height="1.2"/><rect x="3.25" y="6.55" width="1.3" height="1.2"/><rect x="5.30" y="6.55" width="1.3" height="1.2"/><rect x="1.20" y="8.50" width="1.3" height="1.2"/><rect x="3.25" y="8.50" width="1.3" height="1.2"/><rect x="5.30" y="8.50" width="1.3" height="1.2"/></g></svg>
<div class="t" style="left:547px;top:198px;color:#4a4a3a">Зарплата</div>
<svg class="a" style="left:602px;top:199px" width="12" height="8" viewBox="0 0 12 8"><rect x="0.5" y="0.8" width="10" height="6.2" rx=".8" fill="#3f3f38"/><rect x="0.5" y="2.2" width="10" height="1.3" fill="#fae998"/></svg>
<div class="t" style="left:622px;top:198px;color:#4a4a3a">Выплаты</div>
<div class="t" style="left:676px;top:198.5px;color:#3a3a3a;font-size:10px;font-weight:bold">%</div>
<div class="t" style="left:695px;top:198px;color:#4a4a3a">Налоги и взносы</div>
<svg class="a" style="left:780px;top:197px" width="9" height="11" viewBox="0 0 9 11"><path d="M2.5 .5h6v8h-6z M.5 2.5h6v8h-6z" fill="none" stroke="#444" stroke-width="1"/><path d="M2 5h3M2 7h3" stroke="#444"/></svg>
<div class="t" style="left:799px;top:198px;color:#4a4a3a">Отчетность, справки</div>
<svg class="a" style="left:898px;top:197px" width="11" height="11" viewBox="0 0 11 11"><path d="M10 2.5a3 3 0 0 1-4 2.8L1.8 9.6a1 1 0 0 1-1.4-1.4L4.7 4A3 3 0 0 1 8.5.4L6.8 2.1l.4 1.7 1.7.4z" fill="#3a3a3a"/></svg>
<div class="t" style="left:918px;top:198px;color:#4a4a3a">Настройка</div>
<svg class="a" style="left:978px;top:198px" width="10" height="10" viewBox="0 0 10 10"><circle cx="5" cy="5" r="3" fill="none" stroke="#3a3a3a" stroke-width="1.8"/><g stroke="#3a3a3a" stroke-width="1.5"><path d="M5 0v2M5 8v2M0 5h2M8 5h2M1.5 1.5l1.4 1.4M7.1 7.1l1.4 1.4M1.5 8.5l1.4-1.4M7.1 2.9l1.4-1.4"/></g></svg>
<div class="t" style="left:997px;top:198px;color:#4a4a3a">Администрирование</div>

<svg class="a" style="left:390px;top:220px" width="10" height="9" viewBox="0 0 10 9"><path d="M5 0L0 4.5h1.5V9h2.5V6h2v3h2.5V4.5H10z" fill="#444"/></svg>
<div class="t" style="left:406px;top:220px;color:#444">Начальная страница</div>
<div class="sep" style="left:495px;top:215px;height:19px"></div>
<div class="t" style="left:503px;top:220px;color:#444">Все ведомости на выплату зарплаты</div>
<div class="t" style="left:650px;top:220px;color:#555;font-size:9.5px;font-weight:bold">×</div>
<div class="sep" style="left:660px;top:215px;height:19px"></div>
<div class="a" style="left:661px;top:215px;width:140px;height:20px;background:#fff"></div>
<div class="t" style="left:667px;top:220px;color:#444">Ведомость в банк (создание) *</div>
<div class="t" style="left:791px;top:220px;color:#999;font-size:9.5px;font-weight:bold">×</div>
<div class="sep" style="left:801px;top:215px;height:19px"></div>
<div class="a" style="left:662px;top:232px;width:138px;height:2px;background:#3aa36a"></div>

<!-- w2 content -->
<div class="btn" style="left:391px;top:243px;width:47px;height:16px;box-shadow:0 1px 1px rgba(0,0,0,.12)"></div>
<div class="sep" style="left:414px;top:244px;height:14px;background:#dcdcdc"></div>
<svg class="a" style="left:397px;top:248px" width="10" height="7" viewBox="0 0 10 7"><path d="M0.3 3.5L4.2 0.3v6.4z" fill="#333"/><rect x="3.5" y="2.8" width="6" height="1.4" fill="#333"/></svg>
<svg class="a" style="left:421px;top:248px" width="10" height="7" viewBox="0 0 10 7"><path d="M9.7 3.5L5.8 0.3v6.4z" fill="#aaa"/><rect x="0.5" y="2.8" width="6" height="1.4" fill="#aaa"/></svg>
<div class="t h" style="left:475px;top:245px">Ведомость в банк (создание) *</div>

<div class="a" style="left:391px;top:266px;width:50px;height:21px;background:#efefef;border-radius:2px"></div>
<div class="t" style="left:397px;top:272px;color:#444">Основное</div>
<div class="t lnk" style="left:448px;top:272px">Бухгалтерские взаиморасчеты с сотрудниками</div>
<div class="t lnk" style="left:643px;top:272px">Взаиморасчеты с сотрудниками</div>
<div class="t lnk" style="left:781px;top:272px">Зарплата к выплате</div>

<div class="ybtn" style="left:391px;top:295px;width:103px;height:17px;line-height:15px">Провести и закрыть</div>
<div class="btn" style="left:500px;top:295px;width:53px;height:17px;line-height:15px">Записать</div>
<div class="btn" style="left:566px;top:295px;width:55px;height:17px;line-height:15px">Провести</div>
<div class="btn" style="left:634px;top:295px;width:18px;height:17px"></div>
<svg class="a" style="left:638px;top:298px" width="11" height="10" viewBox="0 0 11 10"><path d="M8.5 4.5L5 8a2.2 2.2 0 0 1-3.1-3.1l4-4a1.5 1.5 0 0 1 2.1 2.1L4.3 6.6a.7.7 0 0 1-1-1L6.5 2.5" fill="none" stroke="#666" stroke-width="1"/></svg>
<div class="btn" style="left:659px;top:295px;width:107px;height:17px;line-height:15px;text-align:left;padding-left:8px">Создать на основании <span style="font-size:6px;color:#666">&#9660;</span></div>
<div class="btn" style="left:773px;top:295px;width:58px;height:17px;line-height:15px;text-align:left;padding-left:20px">Печать <span style="font-size:6px;color:#666">&#9660;</span></div>
<svg class="a" style="left:777px;top:299px" width="11" height="10" viewBox="0 0 11 10"><rect x="2.5" y="0.5" width="6" height="3" fill="#fff" stroke="#335"/><rect x="0.5" y="3.5" width="10" height="4" rx="1" fill="#2c4c6e"/><rect x="2.5" y="6.5" width="6" height="3" fill="#fff" stroke="#335"/></svg>

<div class="t" style="left:391px;top:322px">Месяц выплаты:</div>
<div class="fld" style="left:457px;top:319px;width:130px"></div>
<div class="t dk" style="left:460px;top:322px">Август 2018</div>
<div class="fb" style="left:560px;top:320px;width:14px"></div>
<svg class="a" style="left:564px;top:324px" width="7" height="7" viewBox="0 0 7 7"><rect x="0.5" y="1.5" width="6" height="5" fill="none" stroke="#555" stroke-width=".9"/><rect x="0.5" y="1" width="6" height="1.8" fill="#555"/><rect x="1.8" y="0" width="1" height="1.5" fill="#555"/><rect x="4.2" y="0" width="1" height="1.5" fill="#555"/></svg>
<div class="a" style="left:574px;top:320px;width:13px;height:14px;border-left:1px solid #d0d0d0"></div><div class="a" style="left:574px;top:327px;width:13px;height:1px;background:#d8d8d8"></div><div class="a" style="left:579.0px;top:323px;width:0;height:0;border-left:2px solid transparent;border-right:2px solid transparent;border-bottom:1.6px solid #666"></div><div class="a" style="left:579.0px;top:330px;width:0;height:0;border-left:2px solid transparent;border-right:2px solid transparent;border-top:1.6px solid #666"></div>
<div class="t" style="left:846px;top:322px">Дата:</div>
<div class="fld" style="left:925px;top:319px;width:72px"></div>
<div class="t dk" style="left:928px;top:322px">03.08.2018</div>
<div class="fb" style="left:982px;top:320px;width:15px"></div>
<svg class="a" style="left:986px;top:324px" width="7" height="7" viewBox="0 0 7 7"><rect x="0.5" y="1.5" width="6" height="5" fill="none" stroke="#555" stroke-width=".9"/><rect x="0.5" y="1" width="6" height="1.8" fill="#555"/><rect x="1.8" y="0" width="1" height="1.5" fill="#555"/><rect x="4.2" y="0" width="1" height="1.5" fill="#555"/></svg>
<div class="t" style="left:1002px;top:322px">Номер:</div>

<div class="t" style="left:391px;top:343px">Организация:</div>
<div class="fld" style="left:457px;top:341px;width:570px"></div>
<div class="t dk" style="left:460px;top:343px">Крон-Ц</div>
<div class="t" style="left:391px;top:365px">Подразделение:</div>
<div class="fld" style="left:457px;top:362px;width:260px"></div>
<div class="t" style="left:391px;top:387px">Выплачивать:</div>
<div class="fld" style="left:457px;top:384px;width:117px"></div>
<div class="t dk" style="left:460px;top:387px">Отпуска</div>
<div class="fb" style="left:560px;top:385px;width:14px"></div>
<div class="a" style="left:565px;top:391px;width:0;height:0;border-left:2.5px solid transparent;border-right:2.5px solid transparent;border-top:3px solid #555"></div>
<div class="a" style="left:581px;top:386px;width:50px;height:12px;border:1px dotted #b0a0a0"></div>
<div class="t" style="left:582px;top:387px;color:#c0303a;text-decoration:underline">Не выбраны</div>
<div class="t grn" style="left:391px;top:407px;text-decoration:underline">Заполнение всеми причитающимися суммами, без округления</div>

<div class="btn" style="left:391px;top:424px;width:57px">Заполнить</div>
<div class="btn" style="left:455px;top:424px;width:58px">Подобрать</div>
<div class="btn" style="left:520px;top:424px;width:91px">Изменить зарплату</div>
<div class="btn" style="left:618px;top:424px;width:50px;text-align:left;padding-left:7px">Изменить</div>

<div class="a" style="left:391px;top:448px;width:630px;height:232px;border:1px solid #cfcfcf"></div>
<div class="a" style="left:392px;top:449px;width:630px;height:18px;background:#f0f0f0;border-bottom:1px solid #dadada"></div>
<div class="sep" style="left:444px;top:449px;height:18px;background:#d8d8d8"></div>
<div class="sep" style="left:597px;top:449px;height:18px;background:#d8d8d8"></div>
<div class="sep" style="left:960px;top:449px;height:18px;background:#d8d8d8"></div>
<div class="t" style="left:401px;top:453px">N</div>
<div class="t" style="left:455px;top:453px">Сотрудник</div>
<div class="t" style="left:608px;top:453px">Код</div>
<div class="t" style="left:971px;top:453px">НДФЛ к перечислению</div>
<!-- right cover of outside -->
<div class="a" style="left:1017px;top:160px;width:7px;height:527px;background:#fff"></div>
<div class="a" style="left:382px;top:680px;width:642px;height:7px;background:#fff"></div>
<div class="a" style="left:1016px;top:0;width:1px;height:680px;background:#c4c4c4"></div>
<div class="a" style="left:0;top:679px;width:1017px;height:1px;background:#c4c4c4"></div>

<!-- ================= WINDOW 3 (dialog) ================= -->
<div class="a" style="left:639px;top:337px;width:286px;height:295px;background:#fff;border:4px solid #c4c4c4;border-top:none;border-radius:4px 4px 0 0;box-shadow:0 0 2px rgba(0,0,0,.25)"></div>
<div class="a" style="left:639px;top:337px;width:286px;height:17px;border-radius:5px 5px 0 0;background:linear-gradient(#d4d4d4,#cbcbcb 50%,#c2c2c2)"></div>
<div class="a" style="left:643px;top:341px;width:10px;height:10px;border-radius:50%;background:radial-gradient(circle at 40% 35%,#fff7a0,#f2c400 60%,#e0a800)"></div>
<div class="t" style="left:644px;top:341px;font-size:4.5px;color:#d02000;font-weight:bold;line-height:10px">1С</div>
<div class="t" style="left:661px;top:341px;font-size:7.0px;color:#6a6a6a">Отпуска (Т-6) для ... (1С:Предприятие)</div>
<svg class="a" style="left:797px;top:340px" width="11" height="11" viewBox="0 0 11 11"><rect x="2.5" y="0.5" width="6" height="4" fill="#fff" stroke="#aaa"/><rect x="0.5" y="4.5" width="10" height="4.5" rx="1" fill="#b8b8b8" stroke="#999"/><rect x="2.5" y="7.5" width="6" height="3" fill="#fff" stroke="#aaa"/></svg>
<svg class="a" style="left:814px;top:340px" width="10" height="11" viewBox="0 0 10 11"><rect x="0.5" y="0.5" width="9" height="10" fill="#e4e8e4" stroke="#9aaa9a"/><rect x="0.5" y="0.5" width="9" height="2.5" fill="#7cc07c"/></svg>
<svg class="a" style="left:830px;top:340px" width="10" height="11" viewBox="0 0 10 11"><rect x="0.5" y="1.5" width="9" height="9" fill="#f4f4f4" stroke="#b0a090"/><rect x="0.5" y="1.5" width="9" height="2.5" fill="#e8a070"/><path d="M3 6h4M3 8h4" stroke="#999" stroke-width=".7"/></svg>
<div class="sep" style="left:844px;top:340px;height:12px;background:#b8b8b8"></div>
<div class="t" style="left:848px;top:341px;font-size:9px;color:#a86a3a;font-weight:bold">M</div>
<div class="t" style="left:861px;top:341px;font-size:9px;color:#a86a3a;font-weight:bold">M+</div>
<div class="t" style="left:877px;top:341px;font-size:9px;color:#a86a3a;font-weight:bold">M–</div>
<div class="sep" style="left:891px;top:340px;height:12px;background:#b8b8b8"></div>
<div class="a" style="left:896px;top:342px;width:9px;height:8px;border:1px solid #666;border-top-width:1.6px"></div>
<div class="t" style="left:910px;top:340px;font-size:11px;color:#444;font-weight:bold">×</div>

<div class="t h" style="left:651px;top:360px;font-size:11.9px;-webkit-text-stroke:0.1px #222">Отпуска (Т-6) для выплаты по ведомости</div>
<div class="t" style="left:651px;top:386px">Организация:</div>
<div class="fld" style="left:717px;top:384px;width:192px;height:16px"></div>
<div class="t dk" style="left:721px;top:387px">Крон-Ц</div>
<div class="fb" style="left:894px;top:385px;width:15px"></div>
<svg class="a" style="left:898px;top:388px" width="8" height="8" viewBox="0 0 8 8"><rect x="3" y="1" width="4" height="4" fill="none" stroke="#6a6a6a" stroke-width=".9"/><rect x="1" y="3" width="4" height="4" fill="#fff" stroke="#6a6a6a" stroke-width=".9"/></svg>
<div class="t" style="left:651px;top:409px">Подразделение:</div>
<div class="fld" style="left:717px;top:406px;width:192px;height:16px"></div>
<div class="fb" style="left:894px;top:407px;width:15px"></div>
<svg class="a" style="left:898px;top:410px" width="8" height="8" viewBox="0 0 8 8"><rect x="3" y="1" width="4" height="4" fill="none" stroke="#6a6a6a" stroke-width=".9"/><rect x="1" y="3" width="4" height="4" fill="#fff" stroke="#6a6a6a" stroke-width=".9"/></svg>
<div class="t" style="left:651px;top:430px">Месяц:</div>
<div class="fld" style="left:717px;top:427px;width:132px;height:16px"></div>
<div class="t dk" style="left:721px;top:430px">Август 2018</div>
<div class="fb" style="left:820px;top:428px;width:15px"></div>
<div class="t" style="left:823px;top:430px;color:#555;letter-spacing:0.6px">...</div>
<div class="a" style="left:834px;top:428px;width:15px;height:14px;border-left:1px solid #d0d0d0"></div><div class="a" style="left:834px;top:435px;width:15px;height:1px;background:#d8d8d8"></div><div class="a" style="left:840.0px;top:431px;width:0;height:0;border-left:2px solid transparent;border-right:2px solid transparent;border-bottom:1.6px solid #666"></div><div class="a" style="left:840.0px;top:438px;width:0;height:0;border-left:2px solid transparent;border-right:2px solid transparent;border-top:1.6px solid #666"></div>

<div class="btn" style="left:651px;top:449px;width:88px">Открыть документ</div>
<div class="btn" style="left:745px;top:449px;width:55px">Обновить</div>
<div class="btn" style="left:870px;top:449px;width:39px">Еще <span style="font-size:6px;color:#666">&#9660;</span></div>

<div class="a" style="left:651px;top:469px;width:258px;height:133px;border:1px solid #b4b4b4;border-top:none"></div>
<div class="a" style="left:651px;top:469px;width:258px;height:19px;background:#fbeea6"></div>
<div class="a" style="left:651px;top:469px;width:33px;height:19px;background:#f6d63a"></div>
<div class="cb" style="left:663px;top:473px;width:10px;height:10px;border-color:#9a9a9a"></div>
<svg class="a" style="left:663px;top:472px" width="11" height="11" viewBox="0 0 11 11"><path d="M2.2 5.2l2.6 3L9.8 1.3" fill="none" stroke="#2f9a55" stroke-width="1.7"/></svg>
<div class="t dk" style="left:694px;top:473px">003У-000011 от 01.08.2018 - Астров В.Р.</div>

<div class="ybtn" style="left:773px;top:608px;width:56px;height:17px;line-height:15px">Выбрать</div>
<div class="btn" style="left:834px;top:608px;width:50px;height:17px;line-height:15px">Закрыть</div>
<div class="btn dk" style="left:889px;top:608px;width:20px;height:17px;line-height:15px;font-weight:bold">?</div>
</body></html>
